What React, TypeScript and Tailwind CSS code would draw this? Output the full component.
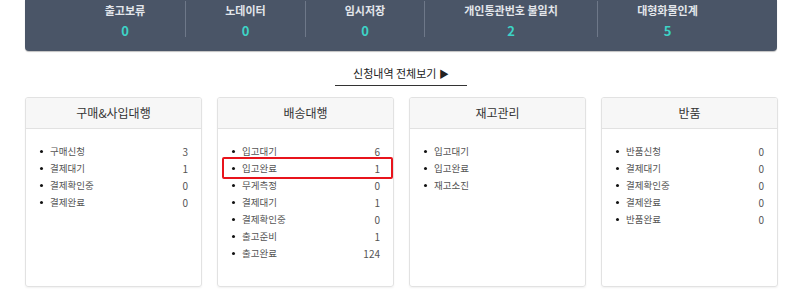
const summary = [
  { label: '출고보류', value: 0, w: 'w-[120px]' },
  { label: '노데이터', value: 0, w: 'w-[120px]' },
  { label: '임시저장', value: 0, w: 'w-[119px]' },
  { label: '개인통관번호 불일치', value: 2, w: 'w-[173px]' },
  { label: '대형화물인계', value: 5, w: 'w-[140px]' },
]

type Row = { name: string; count?: number; mark?: boolean }

const cards: { title: string; rows: Row[] }[] = [
  {
    title: '구매&사입대행',
    rows: [
      { name: '구매신청', count: 3 },
      { name: '결제대기', count: 1 },
      { name: '결제확인중', count: 0 },
      { name: '결제완료', count: 0 },
    ],
  },
  {
    title: '배송대행',
    rows: [
      { name: '입고대기', count: 6 },
      { name: '입고완료', count: 1, mark: true },
      { name: '무게측정', count: 0 },
      { name: '결제대기', count: 1 },
      { name: '결제확인중', count: 0 },
      { name: '출고준비', count: 1 },
      { name: '출고완료', count: 124 },
    ],
  },
  {
    title: '재고관리',
    rows: [{ name: '입고대기' }, { name: '입고완료' }, { name: '재고소진' }],
  },
  {
    title: '반품',
    rows: [
      { name: '반품신청', count: 0 },
      { name: '결제대기', count: 0 },
      { name: '결제확인중', count: 0 },
      { name: '결제완료', count: 0 },
      { name: '반품완료', count: 0 },
    ],
  },
]

export default function App() {
  return (
    <div className="w-[799px] h-[300px] bg-white overflow-hidden font-['Noto_Sans_CJK_KR','Noto_Sans',sans-serif]">
      {/* status summary bar */}
      <div className="ml-[25px] w-[752px] h-[51px] bg-[#4a5567] rounded-b-[4px] shadow-[0_1px_1px_rgba(0,0,0,0.25)] flex pl-[40px]">
        {summary.map((s, i) => (
          <div
            key={s.label}
            className={`${s.w} flex flex-col items-center pt-[1px] h-[36px] mt-[1px] ${i > 0 ? 'border-l border-[#6e7889]' : ''}`}
          >
            <span className="text-[11px] leading-[16px] font-bold text-[#e3e6eb]">{s.label}</span>
            <span className="mt-[5px] text-[13px] leading-[16px] font-bold text-[#3dd3c6]">{s.value}</span>
          </div>
        ))}
      </div>

      <div className="flex justify-center mt-[14px] pl-[3px]">
        <a href="#" className="w-[132px] text-center text-[11px] leading-[16px] text-[#222] border-b border-[#333] pb-[3px]">
          신청내역 전체보기 <span className="text-[10px]">▶</span>
        </a>
      </div>

      <div className="ml-[25px] w-[753px] mt-[11px] grid grid-cols-4 gap-[15px]">
        {cards.map((c) => (
          <div key={c.title} className="h-[190px] border border-[#e2e2e2] rounded-[3px] shadow-[0_1px_2px_rgba(0,0,0,0.06)] overflow-hidden">
            <div className="h-[31px] bg-[#f7f7f7] border-b border-[#e2e2e2] flex items-center justify-center text-[12px] text-[#333]">
              {c.title}
            </div>
            <ul className="pt-[14px] px-[13px]">
              {c.rows.map((r) => (
                <li key={r.name} className="relative h-[17px] flex items-center text-[9.5px] text-[#555]">
                  <span className="w-[3px] h-[3px] rounded-full bg-[#111] ml-[1px] mr-[7px]" />
                  <span className="flex-1">{r.name}</span>
                  {r.count !== undefined && <span className="text-[10px]">{r.count}</span>}
                  {r.mark && (
                    <span className="absolute left-[-9px] right-[-13px] top-[-3px] bottom-[-2px] border-2 border-[#e8141c] rounded-[2px]" />
                  )}
                </li>
              ))}
            </ul>
          </div>
        ))}
      </div>
    </div>
  )
}
